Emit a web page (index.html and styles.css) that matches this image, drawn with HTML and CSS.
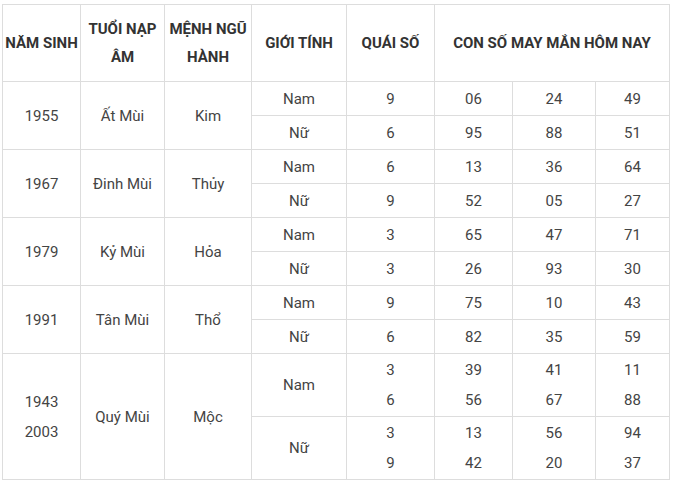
FILE: index.html
```html
<!DOCTYPE html>
<html lang="vi">
<head>
<meta charset="utf-8">
<link rel="stylesheet" href="styles.css">
</head>
<body>
<div class="wrap">
<table class="lucky">
  <colgroup>
    <col class="c1"><col class="c2"><col class="c3"><col class="c4"><col class="c5"><col class="c6"><col class="c7"><col class="c8">
  </colgroup>
  <thead>
    <tr class="head">
      <th class="one">NĂM SINH</th>
      <th>TUỔI NẠP ÂM</th>
      <th>MỆNH NGŨ HÀNH</th>
      <th>GIỚI TÍNH</th>
      <th>QUÁI SỐ</th>
      <th colspan="3">CON SỐ MAY MẮN HÔM NAY</th>
    </tr>
  </thead>
  <tbody>
    <tr class="sub"><td rowspan="2">1955</td><td rowspan="2">Ất Mùi</td><td rowspan="2">Kim</td><td>Nam</td><td>9</td><td>06</td><td>24</td><td>49</td></tr>
    <tr class="sub"><td>Nữ</td><td>6</td><td>95</td><td>88</td><td>51</td></tr>
    <tr class="sub"><td rowspan="2">1967</td><td rowspan="2">Đinh Mùi</td><td rowspan="2">Thủy</td><td>Nam</td><td>6</td><td>13</td><td>36</td><td>64</td></tr>
    <tr class="sub"><td>Nữ</td><td>9</td><td>52</td><td>05</td><td>27</td></tr>
    <tr class="sub"><td rowspan="2">1979</td><td rowspan="2">Kỷ Mùi</td><td rowspan="2">Hỏa</td><td>Nam</td><td>3</td><td>65</td><td>47</td><td>71</td></tr>
    <tr class="sub"><td>Nữ</td><td>3</td><td>26</td><td>93</td><td>30</td></tr>
    <tr class="sub"><td rowspan="2">1991</td><td rowspan="2">Tân Mùi</td><td rowspan="2">Thổ</td><td>Nam</td><td>9</td><td>75</td><td>10</td><td>43</td></tr>
    <tr class="sub"><td>Nữ</td><td>6</td><td>82</td><td>35</td><td>59</td></tr>
    <tr class="tall"><td rowspan="2" class="multi">1943<br>2003</td><td rowspan="2">Quý Mùi</td><td rowspan="2">Mộc</td><td>Nam</td><td class="multi">3<br>6</td><td class="multi">39<br>56</td><td class="multi">41<br>67</td><td class="multi">11<br>88</td></tr>
    <tr class="tall"><td>Nữ</td><td class="multi">3<br>9</td><td class="multi">13<br>42</td><td class="multi">56<br>20</td><td class="multi">94<br>37</td></tr>
  </tbody>
</table>
</div>
</body>
</html>
```
FILE: styles.css
```css
html, body {
  margin: 0;
  padding: 0;
  background: #fff;
}
.wrap {
  padding: 4px 0 0 2px;
}
.lucky {
  border-collapse: collapse;
  table-layout: fixed;
  width: 667px;
  font-family: Roboto, "Liberation Sans", sans-serif;
  font-size: 15px;
  color: #444;
}
.c1 { width: 78px; }
.c2 { width: 84px; }
.c3 { width: 87px; }
.c4 { width: 95px; }
.c5 { width: 88px; }
.c6 { width: 78px; }
.c7 { width: 83px; }
.c8 { width: 74px; }
.lucky th, .lucky td {
  border: 1px solid #ddd;
  padding: 0 4px;
  text-align: center;
  vertical-align: middle;
}
.lucky th {
  font-weight: bold;
  color: #333;
  line-height: 28px;
  padding: 0 2px;
}
.lucky th.one {
  padding: 0;
  white-space: nowrap;
}
.head { height: 77px; }
.sub { height: 34px; }
.tall { height: 63px; }
.multi { line-height: 30px; }
```
